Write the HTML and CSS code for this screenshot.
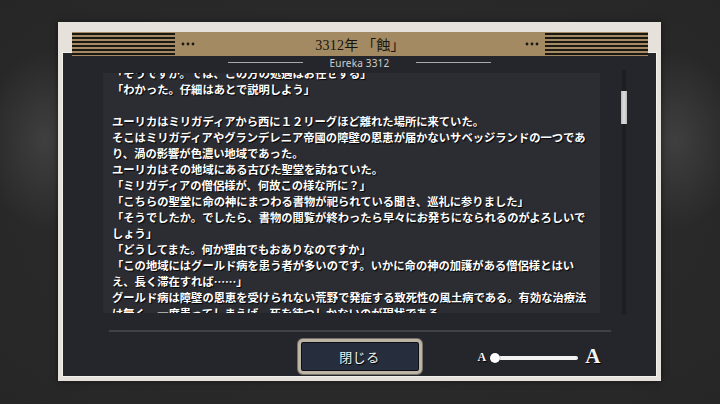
FILE: index.html
```html
<!DOCTYPE html>
<html lang="ja">
<head>
<meta charset="utf-8">
<title>3312年 「蝕」</title>
<link rel="stylesheet" href="styles.css">
</head>
<body>
<div class="screen">
  <div class="frame">
    <header class="titlebar">
      <div class="stripes"></div>
      <svg class="dots" width="14" height="4" viewBox="0 0 14 4"><circle cx="2" cy="2" r="1.4"/><circle cx="7" cy="2" r="1.4"/><circle cx="12" cy="2" r="1.4"/></svg>
      <h1 class="title">3312年 「蝕」</h1>
      <svg class="dots" width="14" height="4" viewBox="0 0 14 4"><circle cx="2" cy="2" r="1.4"/><circle cx="7" cy="2" r="1.4"/><circle cx="12" cy="2" r="1.4"/></svg>
      <div class="stripes"></div>
    </header>
    <section class="panel">
      <div class="subtitle">
        <span class="rule"></span>
        <span class="sub-text">Eureka 3312</span>
        <span class="rule"></span>
      </div>
      <div class="body">
        <div class="textview">
          <div class="text">
            <p>「そうですか。では、この方の処遇はお任せする」</p>
            <p>「わかった。仔細はあとで説明しよう」</p>
            <p>&nbsp;</p>
            <p>ユーリカはミリガディアから西に１２リーグほど離れた場所に来ていた。</p>
            <p>そこはミリガディアやグランデレニア帝國の障壁の恩恵が届かないサベッジランドの一つであ<br>り、渦の影響が色濃い地域であった。</p>
            <p>ユーリカはその地域にある古びた聖堂を訪ねていた。</p>
            <p>「ミリガディアの僧侶様が、何故この様な所に？」</p>
            <p>「こちらの聖堂に命の神にまつわる書物が祀られている聞き、巡礼に参りました」</p>
            <p>「そうでしたか。でしたら、書物の閲覧が終わったら早々にお発ちになられるのがよろしいで<br>しょう」</p>
            <p>「どうしてまた。何か理由でもおありなのですか」</p>
            <p>「この地域にはグールド病を患う者が多いのです。いかに命の神の加護がある僧侶様とはい<br>え、長く滞在すれば……」</p>
            <p>グールド病は障壁の恩恵を受けられない荒野で発症する致死性の風土病である。有効な治療法<br>は無く、一度患ってしまえば、死を待つしかないのが現状である。</p>
          </div>
        </div>
        <div class="scrollbar"><div class="thumb"></div></div>
      </div>
      <div class="separator"></div>
      <div class="footer">
        <div class="spacer"></div>
        <button class="close">閉じる</button>
        <div class="fontsize">
          <span class="a-small">A</span>
          <div class="slider"><span class="knob"></span></div>
          <span class="a-big">A</span>
        </div>
      </div>
    </section>
  </div>
</div>
</body>
</html>
```

FILE: styles.css
```css
html, body {
  margin: 0;
  padding: 0;
}
body {
  width: 720px;
  height: 404px;
  overflow: hidden;
  background:
    radial-gradient(ellipse 60px 90px at 45px 140px, rgba(90,90,90,0.45), rgba(90,90,90,0) 100%),
    radial-gradient(ellipse 60px 90px at 675px 140px, rgba(90,90,90,0.45), rgba(90,90,90,0) 100%),
    radial-gradient(ellipse 500px 300px at 360px 200px, #2f2f2f, #262626 100%);
  font-family: "Noto Sans CJK JP", "Noto Sans", sans-serif;
}
.screen {
  padding: 22px 0 0 58px;
}
.frame {
  box-sizing: border-box;
  width: 603px;
  height: 359px;
  background: #e6e1db;
  padding: 10px 5px 5px 5px;
  display: flex;
  flex-direction: column;
  box-shadow: 0 0 6px rgba(0,0,0,0.5);
}
.titlebar {
  position: relative;
  z-index: 1;
  height: 24px;
  margin: 0 8px 0 9px;
  background: #a38a62;
  display: flex;
  align-items: center;
}
.stripes {
  width: 103px;
  height: 22px;
  background: repeating-linear-gradient(to bottom, #1b1712 0, #1b1712 2px, transparent 2px, transparent 4px);
}
.dots {
  fill: #1b1712;
  margin: 0 6px;
}
.title {
  flex: 1;
  margin: 0;
  text-align: center;
  font-family: "Liberation Serif", "Noto Sans CJK JP", serif;
  font-weight: normal;
  font-size: 14px;
  color: #17130e;
  letter-spacing: 0.2px;
}
.panel {
  flex: 1;
  margin-top: -3px;
  background: #25262b;
  box-shadow: 0 0 0 1px #f3f1ec;
  display: flex;
  flex-direction: column;
}
.subtitle {
  display: flex;
  align-items: center;
  justify-content: center;
  gap: 27px;
  height: 12px;
  padding-top: 4px;
}
.rule {
  width: 75px;
  height: 1px;
  background: #a9a9a9;
  margin-top: -1px;
}
.sub-text {
  font-family: "Noto Sans", sans-serif;
  font-size: 10px;
  line-height: 12px;
  color: #cfcfcf;
  letter-spacing: 0.2px;
}
.body {
  display: flex;
  align-items: flex-start;
  margin-top: 4px;
  padding-left: 40px;
}
.textview {
  width: 497px;
  height: 240px;
  overflow: hidden;
  background: #2c2d33;
}
.text {
  margin-top: -8px;
  padding-left: 9px;
  font-size: 11.3px;
  line-height: 16px;
  color: #ffffff;
  font-weight: bold;
  text-shadow: 1px 1px 1px #000;
  white-space: nowrap;
}
.text p {
  margin: 0;
}
.scrollbar {
  width: 4px;
  height: 245px;
  margin-left: 22px;
  margin-top: -3px;
  background: #1d1e22;
}
.thumb {
  width: 6px;
  height: 33px;
  margin-top: 21px;
  margin-left: -1px;
  background: linear-gradient(to right, #b9b9b9, #e0e0e0 50%, #b9b9b9);
}
.separator {
  height: 2px;
  width: 502px;
  margin: 15px 0 0 46px;
  background: #3f4348;
}
.footer {
  display: grid;
  grid-template-columns: 1fr 124px 1fr;
  margin-top: 7px;
  height: 35px;
}
.close {
  box-sizing: border-box;
  width: 124px;
  height: 35px;
  border: 3px solid #bcb5a5;
  border-radius: 5px;
  background: #262d3c;
  box-shadow: inset 0 0 0 1px #0d0f14, 0 0 0 1px #77716a;
  color: #f2f2f2;
  font-family: "Noto Sans CJK JP", sans-serif;
  font-size: 13px;
  letter-spacing: 0.5px;
  text-shadow: 1px 1px 1px #000;
  padding: 0;
}
.fontsize {
  display: flex;
  align-items: center;
  margin-left: 56px;
}
.a-small, .a-big {
  font-family: "Liberation Serif", serif;
  font-weight: bold;
  color: #f4f4f4;
  text-shadow: 1px 1px 1px #000;
}
.a-small {
  font-size: 12px;
  margin-top: 2px;
}
.a-big {
  font-size: 21px;
  margin-left: 7px;
}
.slider {
  position: relative;
  width: 88px;
  height: 10px;
  margin-left: 4px;
  margin-top: 2px;
}
.slider::before {
  content: "";
  position: absolute;
  left: 5px;
  right: 0;
  top: 3px;
  height: 4px;
  border-radius: 2px;
  background: #f2f2f2;
}
.knob {
  position: absolute;
  left: 0;
  top: 0;
  width: 10px;
  height: 10px;
  border-radius: 50%;
  background: #ffffff;
  box-shadow: 0 0 1px #000;
}
```
